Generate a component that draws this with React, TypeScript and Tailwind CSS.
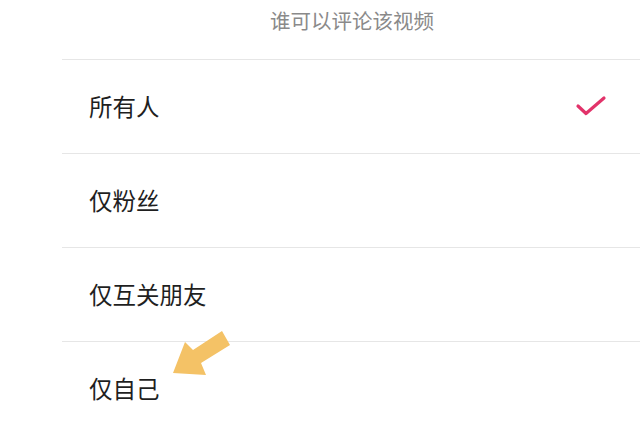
import React from "react";

const rows = ["所有人", "仅粉丝", "仅互关朋友", "仅自己"];

export default function App() {
  return (
    <div
      className="relative w-[640px] h-[427px] overflow-hidden bg-white"
      style={{ fontFamily: '"Noto Sans CJK SC", "Noto Sans", sans-serif' }}
    >
      <div className="h-[59px] flex items-start justify-center pt-[5px] pl-[64px] text-[20.5px] text-[#8a8a8a] leading-[30px]">
        谁可以评论该视频
      </div>
      <div className="ml-[62px]">
        {rows.map((r, i) => (
          <div
            key={r}
            className="h-[94px] border-t border-[#e6e6e6] flex items-center justify-between pl-[27px] pr-[31px]"
          >
            <span className="text-[23.5px] text-[#1f1f1f] leading-none">{r}</span>
            {i === 0 && (
              <svg width="34" height="26" viewBox="0 0 34 26" className="mt-[1px]">
                <path
                  d="M3 12 L11 19.5 L29 4"
                  fill="none"
                  stroke="#e2336a"
                  strokeWidth="3.2"
                  strokeLinecap="round"
                  strokeLinejoin="round"
                />
              </svg>
            )}
          </div>
        ))}
      </div>
      <svg
        className="absolute left-0 top-0 pointer-events-none"
        width="640"
        height="427"
        viewBox="0 0 640 427"
      >
        <polygon
          points="173,373 185,342 193,350 222,331 230,345 201,363 206,375"
          fill="#f4c266"
        />
      </svg>
    </div>
  );
}
